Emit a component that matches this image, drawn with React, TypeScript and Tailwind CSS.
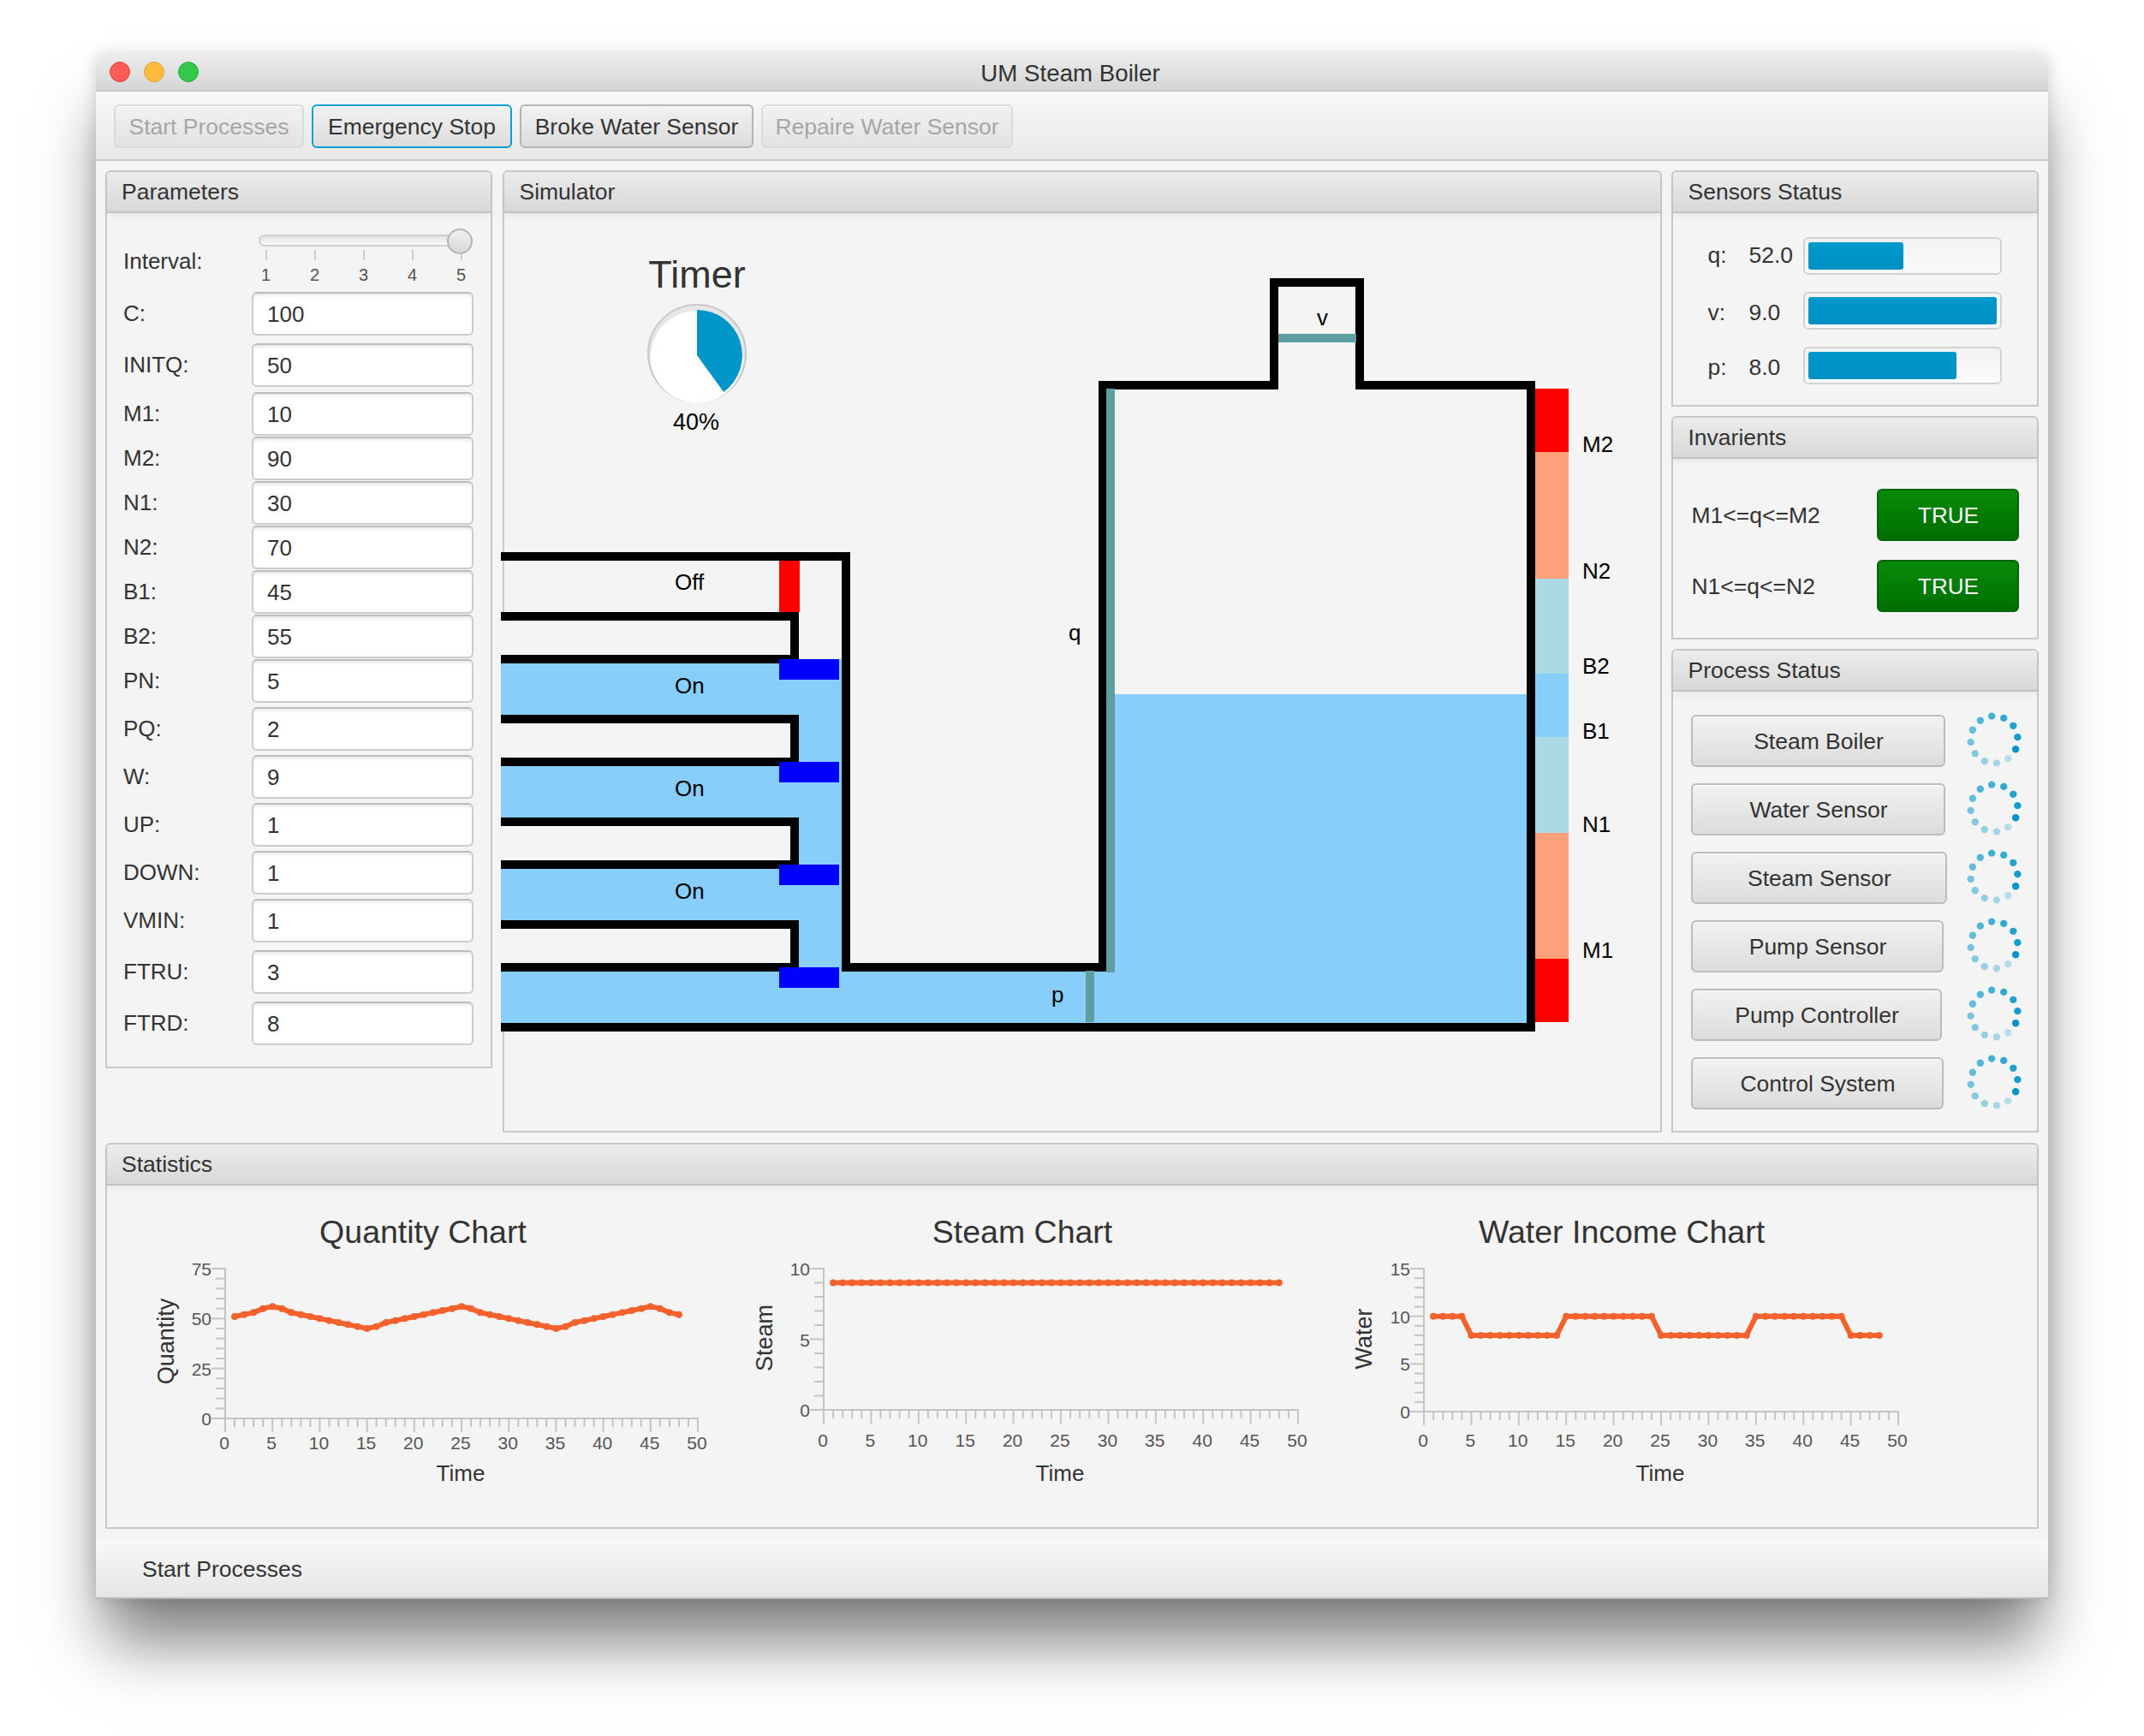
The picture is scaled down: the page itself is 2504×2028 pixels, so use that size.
import type { ReactNode } from "react";

const params = [
  { label: "C:", value: "100", cls: "mt-0" },
  { label: "INITQ:", value: "50", cls: "mt-[9px]" },
  { label: "M1:", value: "10", cls: "mt-[6px]" },
  { label: "M2:", value: "90", cls: "mt-px" },
  { label: "N1:", value: "30", cls: "mt-px" },
  { label: "N2:", value: "70", cls: "mt-px" },
  { label: "B1:", value: "45", cls: "mt-px" },
  { label: "B2:", value: "55", cls: "mt-px" },
  { label: "PN:", value: "5", cls: "mt-px" },
  { label: "PQ:", value: "2", cls: "mt-[5px]" },
  { label: "W:", value: "9", cls: "mt-[5px]" },
  { label: "UP:", value: "1", cls: "mt-[5px]" },
  { label: "DOWN:", value: "1", cls: "mt-[5px]" },
  { label: "VMIN:", value: "1", cls: "mt-[5px]" },
  { label: "FTRU:", value: "3", cls: "mt-[9px]" },
  { label: "FTRD:", value: "8", cls: "mt-[9px]" },
];

const sensors = [
  { label: "q:", value: "52.0", fill: "w-[111px]", text: "pt-0" },
  { label: "v:", value: "9.0", fill: "w-[220px]", text: "pt-[5px]" },
  { label: "p:", value: "8.0", fill: "w-[173px]", text: "pt-[5px]" },
];

const processes = [
  { name: "Steam Boiler", width: "w-[297px]" },
  { name: "Water Sensor", width: "w-[297px]" },
  { name: "Steam Sensor", width: "w-[299px]" },
  { name: "Pump Sensor", width: "w-[295px]" },
  { name: "Pump Controller", width: "w-[293px]" },
  { name: "Control System", width: "w-[295px]" },
];

const btn =
  "h-[51px] pt-[2px] rounded-[6px] border-2 bg-gradient-to-b from-[#f2f2f2] to-[#dcdcdc] text-[26.5px] shadow-[inset_0_1px_0_rgba(255,255,255,0.8)]";

function Panel({ title, className, children }: { title: string; className: string; children?: ReactNode }) {
  return (
    <div className={`border-2 border-[#c8c8c8] rounded-t-[6px] bg-[#f4f4f4] flex flex-col ${className}`}>
      <div className="h-[48px] shrink-0 rounded-t-[4px] border-b-2 border-[#c2c2c2] bg-gradient-to-b from-[#ececec] to-[#d8d8d8] pl-[17px] pt-[2px] flex items-center text-[26.5px] text-[#333] shadow-[0_4px_8px_rgba(0,0,0,0.05)]">
        {title}
      </div>
      {children}
    </div>
  );
}

function Spinner() {
  const dots = Array.from({ length: 12 }, (_, i) => {
    const a = ((24 - i * 30) * Math.PI) / 180;
    return { x: 35 + 27.5 * Math.cos(a), y: 35 + 27.5 * Math.sin(a), o: 1 - (i / 11) * 0.75 };
  });
  return (
    <svg width="70" height="70" viewBox="0 0 70 70" className="shrink-0 ml-[20px] -mt-[3px]">
      {dots.map((d, i) => (
        <circle key={i} cx={d.x} cy={d.y} r="4.2" fill="#0096c9" opacity={d.o} />
      ))}
    </svg>
  );
}

function Simulator() {
  const water = "#87cefa";
  const wall = "#000";
  const pumps = [
    { top: 715, label: "Off", labelY: 689 },
    { top: 835, label: "On", labelY: 810 },
    { top: 955, label: "On", labelY: 930 },
    { top: 1075, label: "On", labelY: 1050 },
  ];
  const scale = [
    { y: 454, h: 74, c: "#ff0000" },
    { y: 528, h: 148, c: "#ffa07a" },
    { y: 676, h: 111, c: "#add8e6" },
    { y: 787, h: 74, c: "#87cefa" },
    { y: 861, h: 112, c: "#add8e6" },
    { y: 973, h: 147, c: "#ffa07a" },
    { y: 1120, h: 74, c: "#ff0000" },
  ];
  const scaleLabels = [
    { t: "M2", y: 528 },
    { t: "N2", y: 676 },
    { t: "B2", y: 787 },
    { t: "B1", y: 863 },
    { t: "N1", y: 972 },
    { t: "M1", y: 1119 },
  ];
  // pie slice, 40% clockwise from the top
  const end = (144 * Math.PI) / 180;
  const slice = `M814 415 L814 362 A53 53 0 0 1 ${814 + 53 * Math.sin(end)} ${415 - 53 * Math.cos(end)} Z`;
  return (
    <svg width="1350" height="1072" viewBox="589 249 1350 1072" className="block overflow-visible text-[26px]">
      <text x="814" y="336" textAnchor="middle" className="text-[45px] fill-[#333]">
        Timer
      </text>
      <circle cx="814" cy="413" r="57" fill="#e6e6e6" stroke="#c8c8c8" strokeWidth="2" />
      <circle cx="814" cy="417" r="54" fill="#fff" />
      <path d={slice} fill="#0096c9" />
      <text x="813" y="502" textAnchor="middle" className="text-[27px] fill-black">
        40%
      </text>

      {/* water */}
      <rect x="585" y="770" width="398" height="365" fill={water} />
      <rect x="585" y="1135" width="701" height="60" fill={water} />
      <rect x="1292" y="811" width="491" height="384" fill={water} />
      <rect x="1268" y="1135" width="30" height="60" fill={water} />

      {/* pump pipes */}
      {pumps.map((p) => (
        <g key={p.top}>
          <path d={`M585 ${p.top + 5} H928 V${p.top + 55} H585`} fill="#f4f4f4" stroke={wall} strokeWidth="10" />
          <text x="788" y={p.labelY} className="fill-black">
            {p.label}
          </text>
        </g>
      ))}
      <rect x="910" y="655" width="24" height="60" fill="#ff0000" />
      {pumps.map((p) => (
        <rect key={p.top} x="910" y={p.top + 55} width="70" height="24" fill="#0000ff" />
      ))}

      {/* boiler walls */}
      <path
        d="M585 650 H988 V1130 H1288 V450 H1488 V330 H1588 V450 H1788 V1200 H585"
        fill="none"
        stroke={wall}
        strokeWidth="10"
      />
      <rect x="1292" y="454" width="10" height="682" fill="#5f9ea0" />
      <rect x="1493" y="390" width="91" height="10" fill="#5f9ea0" />
      <rect x="1268" y="1134" width="10" height="60" fill="#5f9ea0" />
      <text x="1248" y="748" className="fill-black">
        q
      </text>
      <text x="1228" y="1171" className="fill-black">
        p
      </text>
      <text x="1538" y="380" className="fill-black">
        v
      </text>

      {/* level scale */}
      {scale.map((s) => (
        <rect key={s.y} x="1793" y={s.y} width="39" height={s.h} fill={s.c} />
      ))}
      {scaleLabels.map((l) => (
        <text key={l.t} x="1848" y={l.y} className="fill-black">
          {l.t}
        </text>
      ))}
    </svg>
  );
}

type ChartProps = {
  left: number;
  width: number;
  title: string;
  titleX: number;
  yLabel: string;
  yLabelX: number;
  yLabelY: number;
  x0: number;
  x1: number;
  yTop: number;
  yBottom: number;
  yMax: number;
  yStep: number;
  tickLabelY: number;
  data: number[];
};

function Chart(p: ChartProps) {
  const px = (v: number) => p.x0 + ((p.x1 - p.x0) * v) / 50;
  const py = (v: number) => p.yBottom - ((p.yBottom - p.yTop) * v) / p.yMax;
  const xTicks = Array.from({ length: 51 }, (_, i) => i);
  const yDiv = p.yStep / 5;
  const yTicks = Array.from({ length: p.yMax / yDiv + 1 }, (_, i) => i * yDiv);
  const pts = p.data.map((v, i) => `${px(i + 1)},${py(v)}`).join(" ");
  return (
    <svg width={p.width} height="399" viewBox={`${p.left} 1385 ${p.width} 399`} className="block shrink-0">
      <text x={p.titleX} y="1452" textAnchor="middle" className="text-[37.5px] fill-[#333]">
        {p.title}
      </text>
      <text
        x={p.yLabelX}
        y={p.yLabelY}
        textAnchor="middle"
        transform={`rotate(-90 ${p.yLabelX} ${p.yLabelY})`}
        className="text-[27px] fill-[#333]"
      >
        {p.yLabel}
      </text>
      <text x={(p.x0 + p.x1) / 2 - 1} y="1730" textAnchor="middle" className="text-[26px] fill-[#333]">
        Time
      </text>
      <g stroke="#c4c4c4" strokeWidth="2">
        <line x1={p.x0} y1={p.yTop - 1} x2={p.x0} y2={p.yBottom} />
        <line x1={p.x0} y1={p.yBottom} x2={p.x1 + 1} y2={p.yBottom} />
        {xTicks.map((t) => (
          <line key={t} x1={px(t)} y1={p.yBottom} x2={px(t)} y2={p.yBottom + (t % 5 === 0 ? 16 : 10)} />
        ))}
        {yTicks.map((t) => (
          <line key={t} x1={p.x0} y1={py(t)} x2={p.x0 - (t % p.yStep === 0 ? 16 : 11)} y2={py(t)} />
        ))}
      </g>
      {xTicks
        .filter((t) => t % 5 === 0)
        .map((t) => (
          <text key={t} x={px(t) - 1} y={p.tickLabelY} textAnchor="middle" className="text-[21px] fill-[#555]">
            {t}
          </text>
        ))}
      {yTicks
        .filter((t) => t % p.yStep === 0)
        .map((t) => (
          <text key={t} x={p.x0 - 16} y={py(t) + 8} textAnchor="end" className="text-[21px] fill-[#555]">
            {t}
          </text>
        ))}
      <polyline points={pts} fill="none" stroke="#f3622d" strokeWidth="6" />
      {p.data.map((v, i) => (
        <circle key={i} cx={px(i + 1)} cy={py(v)} r="4" fill="#f3622d" />
      ))}
    </svg>
  );
}

const quantityData = [
  51, 52, 53, 55, 56, 55, 53, 52, 51, 50, 49, 48, 47, 46, 45, 46, 48, 49, 50, 51, 52, 53, 54, 55, 56, 55, 53, 52, 51,
  50, 49, 48, 47, 46, 45, 46, 48, 49, 50, 51, 52, 53, 54, 55, 56, 55, 53, 52,
];
const steamData = Array.from({ length: 48 }, () => 9);
const waterData = Array.from({ length: 48 }, (_, i) => {
  const n = i + 1;
  return n <= 4 || (n >= 15 && n <= 24) || (n >= 35 && n <= 44) ? 10 : 8;
});

export default function App() {
  return (
    <div className="w-[2504px] h-[2028px] bg-white pt-[63px] pl-[112px] overflow-hidden font-['Liberation_Sans',Arial,sans-serif] text-[#333]">
      <div className="w-[2280px] h-[1805px] rounded-t-[10px] bg-[#f4f4f4] flex flex-col shadow-[0_60px_70px_-10px_rgba(0,0,0,0.5),0_0_20px_rgba(0,0,0,0.15)]">
        {/* title bar */}
        <div className="h-[44px] shrink-0 rounded-t-[10px] border-b-2 border-[#c8c8c8] bg-gradient-to-b from-[#ededed] to-[#d5d5d5] flex items-center text-[27.7px]">
          <div className="flex gap-[16px] pl-[16px]">
            <div className="w-[24px] h-[24px] rounded-full bg-[#fc5b57] border border-[#e2463f]" />
            <div className="w-[24px] h-[24px] rounded-full bg-[#fdbc40] border border-[#e1a233]" />
            <div className="w-[24px] h-[24px] rounded-full bg-[#34c84a] border border-[#2aac3a]" />
          </div>
          <div className="flex-1 text-center pr-[124px] pt-[3px]">UM Steam Boiler</div>
        </div>

        {/* toolbar */}
        <div className="h-[81px] shrink-0 border-b-2 border-[#c8c8c8] bg-gradient-to-b from-[#f8f8f8] to-[#e8e8e8] pl-[21px] pt-[15px] flex gap-[9px]">
          <button className={`${btn} w-[222px] border-[#dadada] text-[#a6a6a6] from-[#eeeeee] to-[#e2e2e2]`}>Start Processes</button>
          <button className={`${btn} w-[234px] border-[#0a9fd8] shadow-[0_0_4px_rgba(3,158,211,0.5)]`}>Emergency Stop</button>
          <button className={`${btn} w-[273px] border-[#b4b4b4]`}>Broke Water Sensor</button>
          <button className={`${btn} w-[294px] border-[#dadada] text-[#a6a6a6] from-[#eeeeee] to-[#e2e2e2]`}>Repaire Water Sensor</button>
        </div>

        <div className="px-[11px] pt-[11px]">
          <div className="flex gap-[11px] h-[1124px]">
            <Panel title="Parameters" className="w-[453px] h-[1049px] mr-px">
              <div className="pl-[19px]">
                <div className="flex items-center h-[92px]">
                  <div className="w-[150px] mt-[20px] text-[26px]">Interval:</div>
                  <div className="w-[259px] h-[92px] pt-[25px]">
                    <div className="relative ml-[8px] w-[250px] h-[14px] rounded-full border-2 border-[#cfcfcf] bg-gradient-to-b from-[#e2e2e2] to-[#fafafa]">
                      <div className="absolute -right-[2px] -top-[9px] w-[30px] h-[30px] rounded-full border-2 border-[#b4b4b4] bg-gradient-to-b from-[#f0f0f0] to-[#d8d8d8]" />
                    </div>
                    <div className="flex -ml-[12px] mt-[4px]">
                      {[1, 2, 3, 4, 5].map((n) => (
                        <div key={n} className="w-[57px] shrink-0 flex flex-col items-center">
                          <div className="w-[2px] h-[12px] bg-[#cccccc]" />
                          <div className="mt-[6px] text-[20px] leading-[22px] text-[#555]">{n}</div>
                        </div>
                      ))}
                    </div>
                  </div>
                </div>
                {params.map((r) => (
                  <div key={r.label} className={`flex items-center ${r.cls}`}>
                    <div className="w-[150px] text-[26px]">{r.label}</div>
                    <input
                      readOnly
                      value={r.value}
                      className="w-[259px] h-[51px] rounded-[6px] border-2 border-[#cccccc] border-t-[#bcbcbc] bg-white pl-[16px] pt-[2px] text-[26px] text-[#333] shadow-[inset_0_5px_4px_-3px_rgba(0,0,0,0.1)]"
                    />
                  </div>
                ))}
              </div>
            </Panel>

            <Panel title="Simulator" className="w-[1354px]">
              <Simulator />
            </Panel>

            <div className="w-[429px] flex flex-col gap-[11px]">
              <Panel title="Sensors Status" className="h-[276px] shrink-0">
                <div className="pt-[28px] pl-[40px] flex flex-col gap-[20px]">
                  {sensors.map((s) => (
                    <div key={s.label} className="flex items-center h-[44px] text-[26.5px]">
                      <div className={`w-[48px] ${s.text}`}>{s.label}</div>
                      <div className={`w-[64px] ${s.text}`}>{s.value}</div>
                      <div className="w-[232px] h-[44px] rounded-[6px] border-2 border-[#d2d2d2] bg-gradient-to-b from-[#f2f2f2] to-[#fbfbfb] p-[4px]">
                        <div className={`h-full rounded-[3px] bg-gradient-to-b from-[#0098cb] to-[#0090c3] ${s.fill}`} />
                      </div>
                    </div>
                  ))}
                </div>
              </Panel>

              <Panel title="Invarients" className="h-[261px] shrink-0">
                <div className="pt-[35px] pl-[21px] flex flex-col gap-[22px]">
                  {["M1<=q<=M2", "N1<=q<=N2"].map((t) => (
                    <div key={t} className="flex items-center">
                      <div className="w-[217px] pt-[3px] text-[26.5px]">{t}</div>
                      <div className="w-[166px] h-[61px] pt-[2px] rounded-[6px] border-2 border-[#00650a] bg-gradient-to-b from-[#098a09] to-[#006f00] flex items-center justify-center text-white text-[26px]">
                        TRUE
                      </div>
                    </div>
                  ))}
                </div>
              </Panel>

              <Panel title="Process Status" className="flex-1">
                <div className="pt-[27px] pl-[21px] flex flex-col gap-[19px]">
                  {processes.map((p) => (
                    <div key={p.name} className="flex items-center h-[61px]">
                      <div className="w-[299px]">
                        <button className={`${btn} !h-[61px] border-[#bcbcbc] ${p.width}`}>{p.name}</button>
                      </div>
                      <Spinner />
                    </div>
                  ))}
                </div>
              </Panel>
            </div>
          </div>

          <Panel title="Statistics" className="mt-[12px] h-[451px]">
            <div className="flex">
              <Chart
                left={125}
                width={735}
                title="Quantity Chart"
                titleX={494}
                yLabel="Quantity"
                yLabelX={203}
                yLabelY={1567}
                x0={263}
                x1={815}
                yTop={1482}
                yBottom={1657}
                yMax={75}
                yStep={25}
                tickLabelY={1693}
                data={quantityData}
              />
              <Chart
                left={860}
                width={695}
                title="Steam Chart"
                titleX={1194}
                yLabel="Steam"
                yLabelX={902}
                yLabelY={1563}
                x0={962}
                x1={1516}
                yTop={1482}
                yBottom={1647}
                yMax={10}
                yStep={5}
                tickLabelY={1690}
                data={steamData}
              />
              <Chart
                left={1555}
                width={825}
                title="Water Income Chart"
                titleX={1894}
                yLabel="Water"
                yLabelX={1602}
                yLabelY={1564}
                x0={1663}
                x1={2217}
                yTop={1482}
                yBottom={1649}
                yMax={15}
                yStep={5}
                tickLabelY={1690}
                data={waterData}
              />
            </div>
          </Panel>
        </div>

        {/* status bar */}
        <div className="mt-[12px] h-[70px] shrink-0 border-b-2 border-[#b8b8b8] bg-gradient-to-b from-[#f8f8f8] to-[#e5e5e5] pl-[54px] pt-[3px] flex items-center text-[26.5px]">
          Start Processes
        </div>
      </div>
    </div>
  );
}
